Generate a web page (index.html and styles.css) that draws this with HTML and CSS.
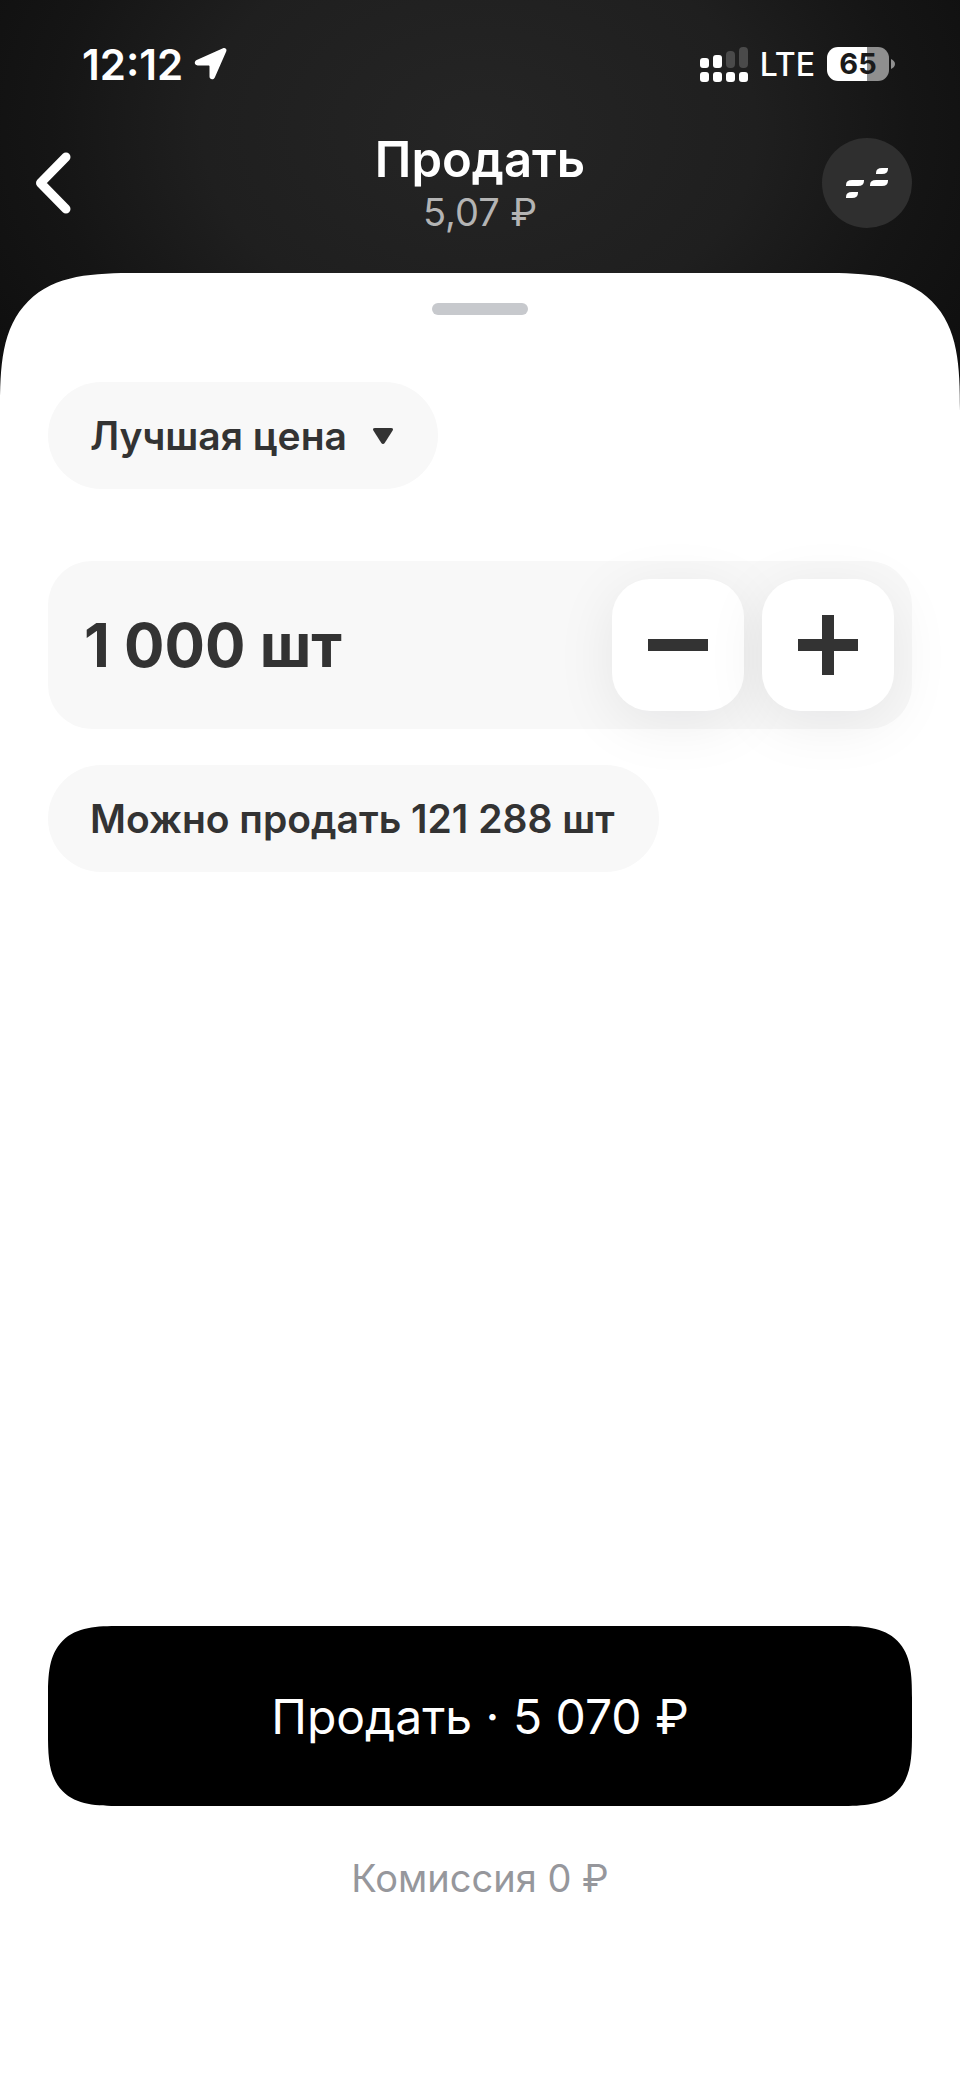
FILE: index.html
```html
<!DOCTYPE html>
<html lang="ru">
<head>
    <meta charset="UTF-8">
    <meta name="viewport" content="width=device-width, initial-scale=1.0">
    <title>Продать</title>
    <link rel="stylesheet" href="styles.css">
</head>
<body>
    <!-- Статус-бар -->
    <div class="status-bar">
        <div class="status-left">
            <span class="time">12:12</span>
            <svg class="location-icon" width="34" height="34" viewBox="0 0 34 34">
                <path d="M2.700 13 29 1.200c2.200-1 4.200.8 3.200 3.200L20.800 30.500c-1.300 2.900-5.300 2.300-5.300-.9V19.500c0-.8-.3-1.100-1.100-1.100H3.600C.3 18.400-.2 14.400 2.700 13z" fill="#fff"/>
            </svg>
        </div>
        <div class="status-right">
            <svg width="48" height="35" viewBox="0 0 48 35">
                <g fill="#4a4a4a">
                    <rect x="26" y="4" width="9" height="17" rx="4"/>
                    <rect x="39" y="0" width="9" height="21" rx="4"/>
                </g>
                <g fill="#fff">
                    <rect x="0" y="11" width="9" height="10" rx="3"/>
                    <rect x="13" y="8" width="9" height="13" rx="3"/>
                    <rect x="0" y="25" width="9" height="10" rx="3"/>
                    <rect x="13" y="25" width="9" height="10" rx="3"/>
                    <rect x="26" y="25" width="9" height="10" rx="3"/>
                    <rect x="39" y="25" width="9" height="10" rx="3"/>
                </g>
            </svg>
            <span class="network">LTE</span>
            <div class="battery-wrap">
                <div class="battery">65</div>
                <svg width="4" height="10" viewBox="0 0 4 10">
                    <path d="M0 0c2.500 1 4 3 4 5s-1.500 4-4 5z" fill="#8f8f8f"/>
                </svg>
            </div>
        </div>
    </div>

    <!-- Шапка -->
    <header class="header">
        <button class="back" type="button" aria-label="Назад">
            <svg width="36" height="62" viewBox="0 0 36 62">
                <path d="M30 5 4.500 31 30 57" fill="none" stroke="#fff" stroke-width="9" stroke-linecap="round" stroke-linejoin="round"/>
            </svg>
        </button>
        <div class="heading">
            <h1>Продать</h1>
            <p>5,07 ₽</p>
        </div>
        <button class="orderbook" type="button" aria-label="Стакан">
            <svg width="42" height="30" viewBox="0 0 42 30" fill="#fff">
                <path d="M36 0h6v1q0 5-6 5h-6V5q0-5 6-5z"/>
                <path d="M6 12h12v1q0 5-6 5H0v-1q0-5 6-5z"/>
                <path d="M30 12h12v1q0 5-6 5H24v-1q0-5 6-5z"/>
                <path d="M6 24h6v1q0 5-6 5H0v-1q0-5 6-5z"/>
            </svg>
        </button>
    </header>

    <!-- Форма заявки -->
    <main class="sheet">
        <div class="handle"></div>

        <label class="pill price">
            <select aria-label="Тип цены">
                <option>Лучшая цена</option>
            </select>
            <svg width="22" height="18" viewBox="0 0 22 18">
                <path d="M3 1h16q3 0 1.500 2.700L13 15.500q-2 3-4 0L1.500 3.700Q0 1 3 1z" fill="#333"/>
            </svg>
        </label>

        <div class="stepper">
            <input type="text" aria-label="Количество" value="1&nbsp;000 шт">
            <button type="button" aria-label="Меньше">
                <svg width="60" height="60" viewBox="0 0 60 60"><path d="M0 24h60v12H0z" fill="#333"/></svg>
            </button>
            <button type="button" aria-label="Больше">
                <svg width="60" height="60" viewBox="0 0 60 60"><path d="M0 24h24V0h12v24h24v12H36v24H24V36H0z" fill="#333"/></svg>
            </button>
        </div>

        <button class="pill available" type="button">Можно продать 121 288 шт</button>

        <div class="footer">
            <button class="sell" type="button">Продать · 5 070 ₽</button>
            <p class="fee">Комиссия 0 ₽</p>
        </div>
    </main>
</body>
</html>
```
FILE: styles.css
```css
* {
    box-sizing: border-box;
}

body {
    margin: 0;
    min-height: 100vh;
    display: flex;
    flex-direction: column;
    font-family: Inter, "Liberation Sans", sans-serif;
    color: #333;
    background: #000 radial-gradient(ellipse 64% 440px at 50% 130px, #252525 0%, #1f1f1f 45%, #151515 70%, #0d0d0d 100%) no-repeat;
}

h1, p {
    margin: 0;
}

button, input, select {
    font-family: inherit;
    color: inherit;
    border: none;
    margin: 0;
    padding: 0;
    background: none;
}

button {
    cursor: pointer;
}

svg {
    display: block;
    flex: none;
}

/* Статус-бар */
.status-bar {
    display: flex;
    justify-content: space-between;
    align-items: center;
    height: 128px;
    padding: 0 65px 0 82px;
    color: #fff;
}

.status-left {
    display: flex;
    align-items: center;
    gap: 11px;
}

.time {
    font-size: 42px;
    font-weight: 600;
}

.status-right {
    display: flex;
    align-items: center;
    gap: 12px;
}

.network {
    font-size: 32px;
    font-weight: 500;
}

.battery-wrap {
    display: flex;
    align-items: center;
    gap: 2px;
}

.battery {
    width: 62px;
    height: 34px;
    border-radius: 11px;
    background: linear-gradient(90deg, #fff 65%, #8f8f8f 65%);
    color: #1a1a1a;
    font-size: 29px;
    line-height: 34px;
    font-weight: 700;
    text-align: center;
}

/* Шапка */
.header {
    display: grid;
    grid-template-columns: 90px 1fr 90px;
    align-items: center;
    height: 145px;
    padding: 0 48px 36px 36px;
    color: #fff;
}

.heading {
    text-align: center;
    padding: 5px 0 0 12px;
}

.heading h1 {
    font-size: 49px;
    line-height: 54px;
    font-weight: 600;
}

.heading p {
    font-size: 38px;
    line-height: 50px;
    color: #b4b4b4;
}

.orderbook {
    display: flex;
    align-items: center;
    justify-content: center;
    width: 90px;
    height: 90px;
    border-radius: 50%;
    background: #2f2f2f;
}

/* Белая панель */
.sheet {
    flex: 1;
    display: flex;
    flex-direction: column;
    align-items: flex-start;
    padding: 30px 48px 177px;
    background: #fff;
    border-radius: 138px 138px 0 0;
    corner-shape: superellipse(1.6);
}

.handle {
    align-self: center;
    width: 96px;
    height: 12px;
    border-radius: 6px;
    background: #c7c9cd;
}

.pill {
    display: flex;
    align-items: center;
    height: 107px;
    padding: 0 44px 0 42px;
    border-radius: 54px;
    background: #f8f8f8;
    font-size: 39px;
    font-weight: 600;
}

.price {
    margin-top: 67px;
    gap: 25px;
}

.price select {
    appearance: none;
    font-size: 39px;
    font-weight: 600;
    cursor: pointer;
}

.stepper {
    display: flex;
    align-items: center;
    align-self: stretch;
    gap: 18px;
    margin: 72px 0 36px;
    padding: 18px 18px 18px 36px;
    border-radius: 44px;
    background: #f8f8f8;
}

.stepper input {
    flex: 1;
    min-width: 0;
    font-size: 60px;
    font-weight: 700;
}

.stepper button {
    display: flex;
    align-items: center;
    justify-content: center;
    width: 132px;
    height: 132px;
    border-radius: 38px;
    background: #fff;
    box-shadow: 0 12px 60px rgba(0, 0, 20, 0.08);
}

.footer {
    align-self: stretch;
    margin-top: auto;
}

.sell {
    width: 100%;
    height: 180px;
    border-radius: 72px;
    corner-shape: superellipse(1.6);
    background: #000;
    color: #fff;
    font-size: 48px;
}

.fee {
    margin-top: 48px;
    text-align: center;
    font-size: 38px;
    line-height: 48px;
    color: #96979c;
}
```
